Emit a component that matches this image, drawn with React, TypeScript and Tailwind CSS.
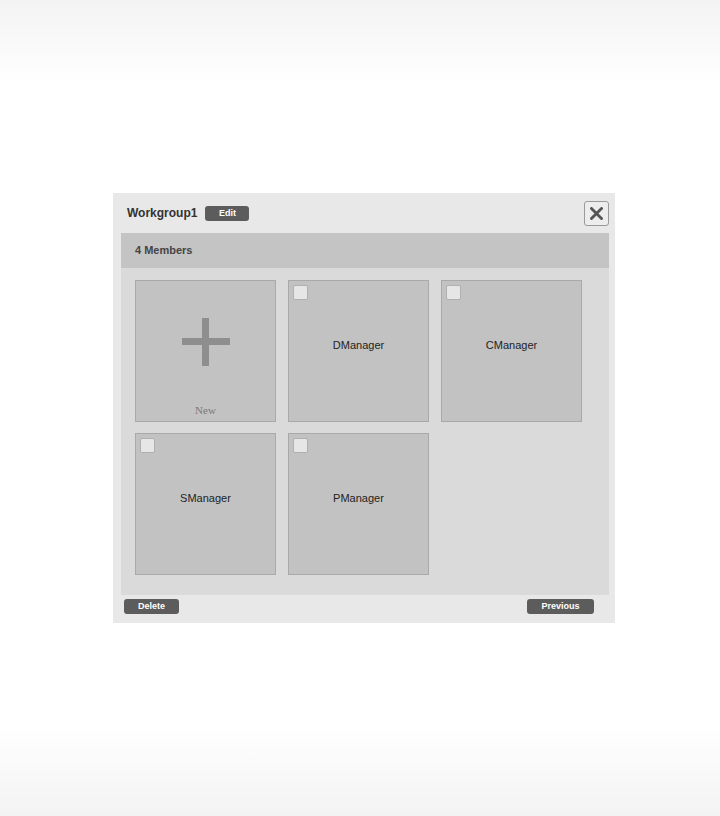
import React from "react";

const Tile = ({ name }: { name: string }) => (
  <div className="relative w-[141px] h-[142px] bg-[#c3c2c3] border border-[#a9a9a9] flex items-center justify-center">
    <div className="absolute left-[4px] top-[4px] w-[15px] h-[15px] bg-[#e6e6e6] border border-[#b0b0b0] rounded-[2px]" />
    <span className="mb-[12px] text-[11px] text-[#222] leading-none">{name}</span>
  </div>
);

const NewTile = () => (
  <div className="relative w-[141px] h-[142px] bg-[#c3c2c3] border border-[#a9a9a9] flex flex-col items-center">
    <svg className="mt-[37px]" width="48" height="48" viewBox="0 0 48 48">
      <rect x="0" y="20" width="48" height="7" fill="#8e8e8e" />
      <rect x="20" y="0" width="7" height="48" fill="#8e8e8e" />
    </svg>
    <span className="mt-[39px] text-[11px] leading-none text-[#7a7a7a] font-['Liberation_Serif',serif]">New</span>
  </div>
);

export default function App() {
  return (
    <div className="w-[720px] h-[816px] bg-[linear-gradient(to_bottom,#f3f3f3_0px,#ffffff_85px,#ffffff_725px,#f3f3f3_816px)] font-['Liberation_Sans',Arial,sans-serif] pt-[193px]">
      <div className="ml-[113px] w-[502px] h-[430px] bg-[#e8e8e8] flex flex-col">
        <div className="h-[40px] flex items-center pl-[14px] pr-[6px]">
          <span className="text-[12px] font-bold text-[#333]">Workgroup1</span>
          <button className="ml-[8px] h-[15px] w-[44px] rounded-[3px] bg-[#5c5c5c] text-white text-[9px] font-bold leading-none flex items-center justify-center">
            Edit
          </button>
          <button className="ml-auto w-[25px] h-[25px] rounded-[3px] border border-[#9a9a9a] bg-[#ededed] flex items-center justify-center">
            <svg width="13" height="13" viewBox="0 0 13 13">
              <path d="M1.5 1.5 L11.5 11.5 M11.5 1.5 L1.5 11.5" stroke="#555" strokeWidth="2.8" strokeLinecap="square" />
            </svg>
          </button>
        </div>
        <div className="ml-[8px] mr-[6px] h-[35px] bg-[#c4c4c4] flex items-center pl-[14px]">
          <span className="text-[11px] font-bold text-[#444]">4 Members</span>
        </div>
        <div className="ml-[8px] mr-[6px] h-[327px] bg-[#dadada] pt-[12px] pl-[14px]">
          <div className="grid grid-cols-[141px_141px_141px] gap-x-[12px] gap-y-[11px]">
            <NewTile />
            <Tile name="DManager" />
            <Tile name="CManager" />
            <Tile name="SManager" />
            <Tile name="PManager" />
          </div>
        </div>
        <div className="flex-1 flex items-start pt-[4px] pl-[11px] pr-[21px]">
          <button className="h-[15px] w-[55px] rounded-[3px] bg-[#5c5c5c] text-white text-[9px] font-bold leading-none flex items-center justify-center">
            Delete
          </button>
          <button className="ml-auto h-[15px] w-[67px] rounded-[3px] bg-[#5c5c5c] text-white text-[9px] font-bold leading-none flex items-center justify-center">
            Previous
          </button>
        </div>
      </div>
    </div>
  );
}
